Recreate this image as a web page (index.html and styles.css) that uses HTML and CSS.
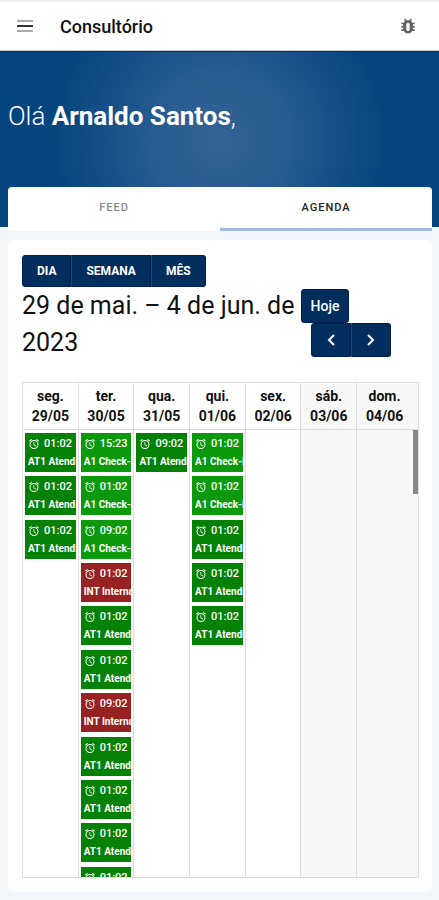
FILE: index.html
```
<!DOCTYPE html>
<html lang="pt-BR">
<head>
  <meta charset="UTF-8" />
  <meta name="viewport" content="width=device-width, initial-scale=1.0" />
  <title>Consultório</title>
  <link rel="stylesheet" href="styles.css">
</head>
<body>
  <svg class="sprite" aria-hidden="true">
    <symbol id="alarm" viewBox="0 0 24 24">
      <path d="M22 5.7l-4.6-3.9-1.3 1.5 4.6 3.9zM7.9 3.4L6.6 1.9 2 5.7l1.3 1.5zM12.5 8H11v6l4.7 2.9.8-1.3-4-2.3zM12 4a9 9 0 1 0 0 18 9 9 0 0 0 0-18zm0 16a7 7 0 1 1 0-14 7 7 0 0 1 0 14z"/>
    </symbol>
  </svg>

  <header class="topbar">
    <button class="icon-btn" aria-label="Menu">
      <svg width="16" height="14" viewBox="0 0 16 14">
        <path d="M0 1h16v2H0zM0 11h16v2H0z" fill="#aaa"/>
        <path d="M0 6h16v2H0z" fill="#333"/>
      </svg>
    </button>
    <h1>Consultório</h1>
    <button class="icon-btn bug" aria-label="Reportar problema">
      <svg width="20" height="20" viewBox="0 0 24 24">
        <path d="M20 8h-2.8a6 6 0 0 0-1.8-2L17 4.4 15.6 3l-2.2 2.2a6 6 0 0 0-2.8 0L8.4 3 7 4.4 8.6 6a6 6 0 0 0-1.8 2H4v2h2.1L6 11v1H4v2h2v1l.1 1H4v2h2.800a6 6 0 0 0 10.4 0H20v-2h-2.100l.1-1v-1h2v-2h-2v-1l-.1-1H20zm-6 8a2 2 0 0 1-4 0v-6a2 2 0 0 1 4 0z" fill="#666"/>
      </svg>
    </button>
  </header>

  <section class="hero">
    <p>Olá <strong>Arnaldo Santos</strong>,</p>
  </section>

  <nav class="tabs">
    <a href="#feed">FEED</a>
    <a href="#agenda" class="active">AGENDA</a>
  </nav>

  <main class="card" id="agenda">
    <div class="btn-group">
      <button>DIA</button>
      <button>SEMANA</button>
      <button>MÊS</button>
    </div>
    <div class="toolbar">
      <h2>29 de mai. – 4 de jun. de 2023</h2>
      <div class="toolbar-right">
        <button class="today">Hoje</button>
        <div class="btn-group arrows">
          <button aria-label="Semana anterior">
            <svg width="10" height="14" viewBox="0 0 10 14"><path d="M8 2L3 7l5 5"/></svg>
          </button>
          <button aria-label="Próxima semana">
            <svg width="10" height="14" viewBox="0 0 10 14"><path d="M2 2l5 5-5 5"/></svg>
          </button>
        </div>
      </div>
    </div>

    <div class="calendar">
      <table>
        <thead>
          <tr>
            <th>seg.<br>29/05</th>
            <th>ter.<br>30/05</th>
            <th>qua.<br>31/05</th>
            <th>qui.<br>01/06</th>
            <th>sex.<br>02/06</th>
            <th class="weekend">sáb.<br>03/06</th>
            <th class="weekend last">dom.<br>04/06</th>
          </tr>
        </thead>
      </table>
      <div class="scroller">
        <table>
          <tbody>
            <tr id="week"></tr>
          </tbody>
        </table>
        <div class="thumb"></div>
      </div>
    </div>
  </main>

  <script>
    const types = {
      at: { label: "AT1 Atendimento", css: "atend" },
      a1: { label: "A1 Check-in", css: "check" },
      int: { label: "INT Internação", css: "intern" }
    };

    const days = [
      [["01:02", "at"], ["01:02", "at"], ["01:02", "at"]],
      [["15:23", "a1"], ["01:02", "a1"], ["09:02", "a1"], ["01:02", "int"], ["01:02", "at"], ["01:02", "at"],
       ["09:02", "int"], ["01:02", "at"], ["01:02", "at"], ["01:02", "at"], ["01:02", "at"]],
      [["09:02", "at"]],
      [["01:02", "a1"], ["01:02", "a1"], ["01:02", "at"], ["01:02", "at"], ["01:02", "at"]],
      [], [], []
    ];

    const week = document.getElementById("week");
    days.forEach((events, i) => {
      const td = document.createElement("td");
      if (i > 4) td.className = i === 6 ? "weekend last" : "weekend";
      const items = events.map(([time, type]) => `
        <li><a href="#" class="event ${types[type].css}">
          <span class="time"><svg width="12" height="12"><use href="#alarm"/></svg>${time}</span>
          <span class="name">${types[type].label}</span>
        </a></li>`).join("");
      td.innerHTML = `<ul class="events">${items}</ul>`;
      week.appendChild(td);
    });
  </script>
</body>
</html>
```
FILE: styles.css
```
* { box-sizing: border-box; }

body {
  margin: 0;
  background: #f2f5f9;
  color: #111;
  font-family: Roboto, sans-serif;
}

h1, h2, p, ul { margin: 0; padding: 0; }
button { font-family: inherit; border: none; padding: 0; cursor: pointer; }
a { text-decoration: none; }
.sprite { display: none; }

.topbar {
  display: flex; align-items: center;
  height: 51px; padding: 0 21px 0 17px;
  background: white;
  border-top: 2px solid #f0f0f0;
  border-bottom: 1px solid #c5cad6;
}
.topbar h1 {
  flex: 1; margin-left: 27px;
  font-size: 18px; font-weight: 500;
}
.icon-btn { display: flex; background: none; }

.hero {
  height: 176px; padding: 46px 8px 0;
  background: radial-gradient(circle at 50% 50%, #356396 0%, #265a90 30%, #05457f 70%);
  border-top: 1px solid #03306b;
  color: white;
}
.hero p {
  font-size: 26px; line-height: 36px; font-weight: 300;
}
.hero strong { font-weight: 700; }

.tabs {
  display: flex;
  margin: -40px 7px 0 8px;
  background: white;
  border-radius: 4px 4px 0 0;
}
.tabs a {
  flex: 1; height: 44px;
  border-bottom: 3px solid transparent;
  color: #888; text-align: center;
  font-size: 11px; line-height: 42px; font-weight: 500;
  letter-spacing: 1px;
}
.tabs a.active { color: #222; border-color: #a5b9dc; }

.card {
  margin: 9px 7px 8px 8px; padding: 15px 13px 14px 14px;
  background: white;
  border-radius: 5px;
}

.btn-group { display: inline-flex; vertical-align: top; }
.btn-group button, .today {
  background: #022e5d; color: white;
  border: 1px solid #021f55;
}
.btn-group button {
  height: 32px; padding: 0 14px;
  font-size: 12px; font-weight: 700;
}
.btn-group button + button { border-left-color: #1b477a; }
.btn-group button:first-child { border-radius: 3px 0 0 3px; }
.btn-group button:last-child { border-radius: 0 3px 3px 0; }

.toolbar { display: flex; align-items: flex-start; }
.toolbar h2 {
  flex: 1;
  font-size: 25px; line-height: 37px; font-weight: 400;
}
.toolbar-right {
  display: flex; flex-wrap: wrap;
  width: 118px; padding-top: 2px;
}
.today {
  width: 48px; height: 34px;
  border-radius: 3px;
  font-size: 14px; font-weight: 500;
}
.arrows { margin-left: 10px; }
.arrows button { width: 40px; height: 34px; }
.arrows svg { vertical-align: middle; }
.arrows path { fill: none; stroke: white; stroke-width: 2; }

.calendar {
  margin-top: 21px;
  border: 1px solid #ddd;
}
table {
  width: 100%;
  border-collapse: separate; border-spacing: 0;
  table-layout: fixed;
}
th, td { padding: 0; width: 14.1%; border-right: 1px solid #ddd; }
.last { width: auto; border-right: none; }
th {
  height: 47px;
  border-bottom: 1px solid #ddd;
  font-size: 14px; line-height: 20px; font-weight: 700;
}
th.last { padding-right: 6px; }
.weekend { background: #f7f7f7; }

.scroller {
  position: relative;
  height: 447px; overflow: hidden;
}
td { vertical-align: top; height: 480px; }
.thumb {
  position: absolute; top: 0; right: 0;
  width: 5px; height: 64px;
  background: #888;
}

/* 11 rows share the height of the column */
.events {
  display: grid;
  grid-template-rows: repeat(11, 1fr);
  grid-template-columns: minmax(0, 1fr);
  height: 480px; padding: 3px 2px 0;
  list-style: none;
}
.event {
  display: block; height: 39px;
  padding: 2px 0 0 3px; overflow: hidden;
  color: white; white-space: nowrap;
  font-size: 10px; line-height: 18px; font-weight: 700;
}
.event .time {
  display: flex; align-items: center; gap: 4px;
  font-size: 11px; font-weight: 500;
}
.event .name { display: block; }
.event svg { fill: white; }
.atend { background: #058205; }
.check { background: #0c9a0c; }
.intern { background: #982222; }
```
